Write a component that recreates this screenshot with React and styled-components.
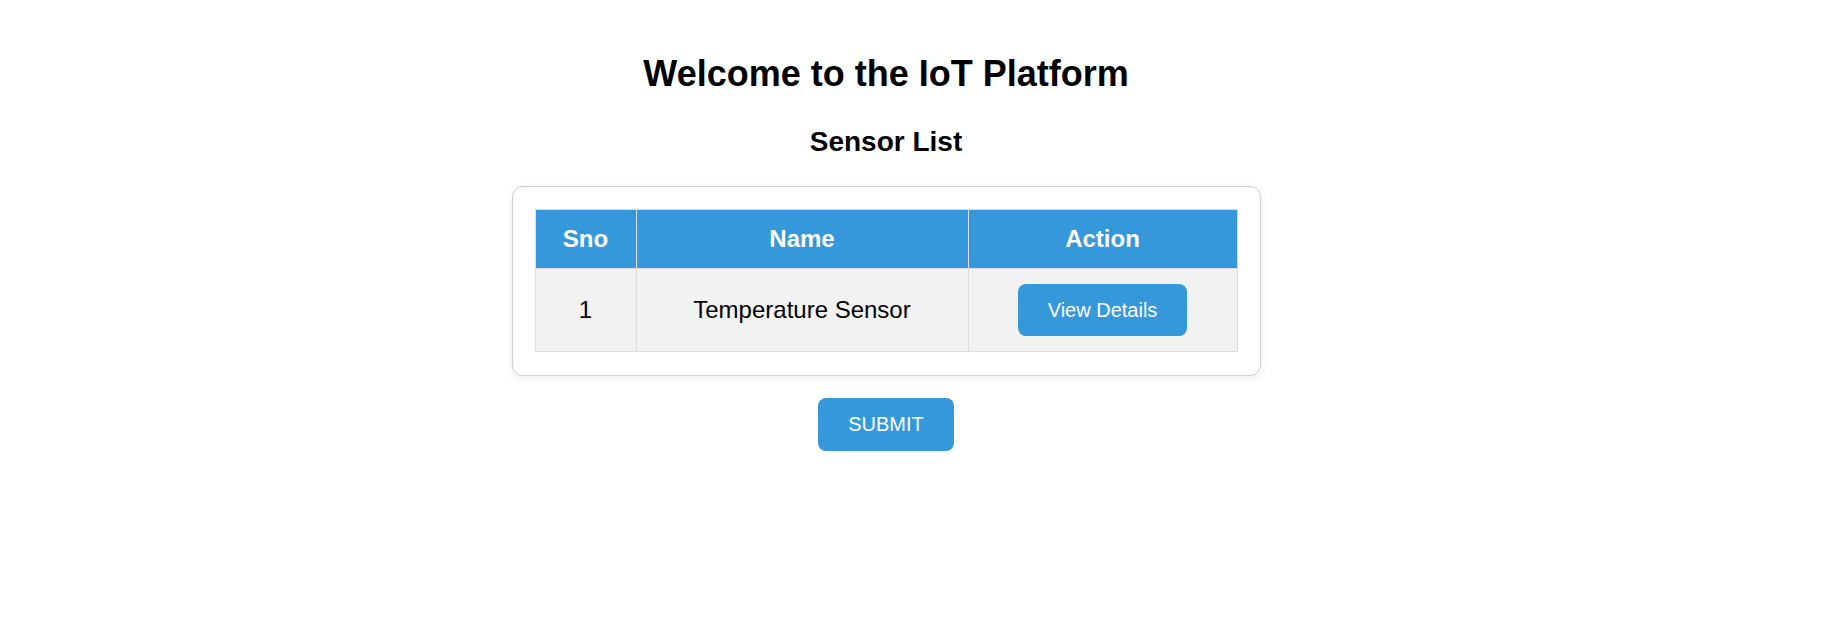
import React from "react";
import styled, { createGlobalStyle } from "styled-components";

const GlobalStyle = createGlobalStyle`
  body {
    margin: 0;
    background: #fff;
    font-family: "Liberation Sans", Arial, sans-serif;
    color: #000;
  }
`;

const Page = styled.div`
  display: flex;
  flex-direction: column;
  align-items: center;
  padding: 53px 56px 0 0;
`;

const Title = styled.h1`
  font-size: 36px;
  font-weight: bold;
  margin: 0 0 31px;
`;

const SubTitle = styled.h2`
  font-size: 28px;
  font-weight: bold;
  margin: 0 0 28px;
`;

const Card = styled.div`
  width: 749px;
  box-sizing: border-box;
  padding: 22px 22px 23px;
  border: 1px solid #d0d0d0;
  border-radius: 11px;
  background: #fff;
  box-shadow: 0 2px 10px rgba(0, 0, 0, 0.08);
`;

const Table = styled.table`
  width: 702px;
  border-collapse: collapse;
  table-layout: fixed;
`;

const Th = styled.th`
  background: #3498db;
  color: #fff;
  font-size: 24px;
  font-weight: bold;
  line-height: 28px;
  padding: 15px;
  border: 1px solid #ddd;
  text-align: center;
`;

const Td = styled.td`
  background: #f2f2f2;
  font-size: 24px;
  padding: 15px;
  border: 1px solid #ddd;
  text-align: center;
  vertical-align: middle;
`;

const Button = styled.button`
  background: #3498db;
  color: #fff;
  border: none;
  border-radius: 8px;
  font-family: "Liberation Sans", Arial, sans-serif;
  font-size: 20px;
  line-height: 22px;
  padding: 15px 30px;
  cursor: pointer;
`;

const SubmitButton = styled(Button)`
  margin-top: 22px;
  padding: 15px 30px 16px;
`;

const sensors = [{ id: 1, name: "Temperature Sensor" }];

export default function App() {
  return (
    <>
      <GlobalStyle />
      <Page>
        <Title>Welcome to the IoT Platform</Title>
        <SubTitle>Sensor List</SubTitle>
        <Card>
          <Table>
            <colgroup>
              <col style={{ width: 101 }} />
              <col style={{ width: 332 }} />
              <col style={{ width: 269 }} />
            </colgroup>
            <thead>
              <tr>
                <Th>Sno</Th>
                <Th>Name</Th>
                <Th>Action</Th>
              </tr>
            </thead>
            <tbody>
              {sensors.map((s, i) => (
                <tr key={s.id}>
                  <Td>{i + 1}</Td>
                  <Td>{s.name}</Td>
                  <Td>
                    <Button>View Details</Button>
                  </Td>
                </tr>
              ))}
            </tbody>
          </Table>
        </Card>
        <SubmitButton>SUBMIT</SubmitButton>
      </Page>
    </>
  );
}
